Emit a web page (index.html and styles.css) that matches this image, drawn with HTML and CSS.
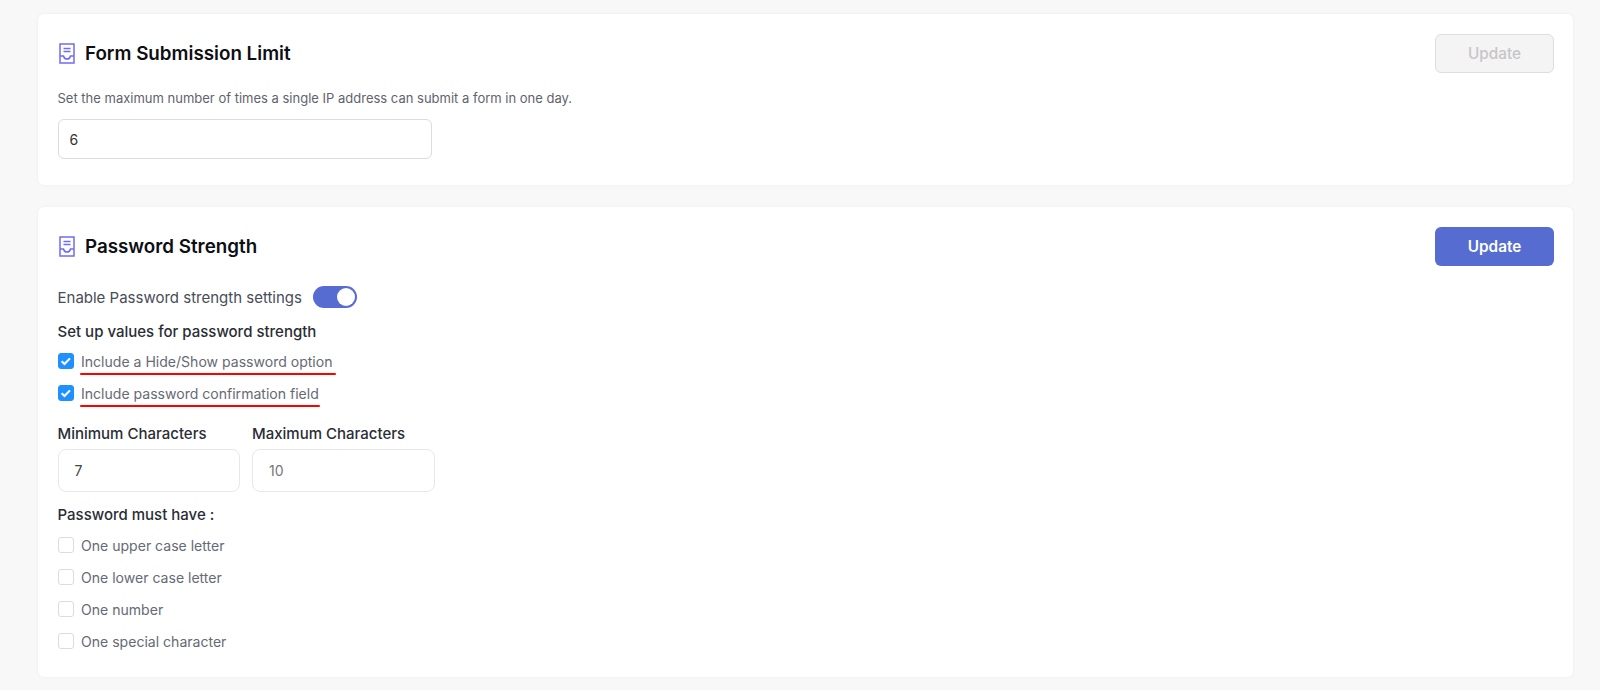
FILE: index.html
```html
<!DOCTYPE html>
<html lang="en">
<head>
<meta charset="utf-8">
<title>Settings</title>
<link rel="stylesheet" href="styles.css">
</head>
<body>
<main class="page">
  <section class="card card-limit">
    <header class="card-head">
      <h2 class="card-title">
        <svg class="doc-icon" viewBox="0 0 16 21" fill="none" stroke="#6f6cf6" stroke-width="1.500"><path d="M1 1h14v19H1z"/><path d="M4.500 5.500h7M4.500 8.500h7"/><path d="M1 13h3.500c.4 2 1.700 3 3.500 3s3.100-1 3.500-3H15"/></svg>
        Form Submission Limit
      </h2>
      <button class="btn btn-disabled" type="button">Update</button>
    </header>
    <p class="hint">Set the maximum number of times a single IP address can submit a form in one day.</p>
    <div class="input input-wide">6</div>
  </section>

  <section class="card card-strength">
    <header class="card-head">
      <h2 class="card-title">
        <svg class="doc-icon" viewBox="0 0 16 21" fill="none" stroke="#6f6cf6" stroke-width="1.500"><path d="M1 1h14v19H1z"/><path d="M4.500 5.500h7M4.500 8.500h7"/><path d="M1 13h3.500c.4 2 1.700 3 3.500 3s3.100-1 3.500-3H15"/></svg>
        Password Strength
      </h2>
      <button class="btn btn-primary" type="button">Update</button>
    </header>
    <div class="toggle-row">
      <span>Enable Password strength settings</span>
      <span class="toggle"><span class="knob"></span></span>
    </div>
    <h3 class="sub sub-values">Set up values for password strength</h3>
    <div class="check-row">
      <span class="box box-on"><svg viewBox="0 0 16 16" fill="none" stroke="#fff" stroke-width="2.400"><path d="M3 8.300l3.300 3.200 6.200-6.500"/></svg></span>
      <span class="check-label">Include a Hide/Show password option<i class="mark mark-one"></i></span>
    </div>
    <div class="check-row">
      <span class="box box-on"><svg viewBox="0 0 16 16" fill="none" stroke="#fff" stroke-width="2.400"><path d="M3 8.300l3.300 3.200 6.200-6.500"/></svg></span>
      <span class="check-label">Include password confirmation field<i class="mark mark-two"></i></span>
    </div>
    <div class="fields">
      <label class="field"><span class="sub">Minimum Characters</span><span class="input input-dark">7</span></label>
      <label class="field"><span class="sub">Maximum Characters</span><span class="input input-muted">10</span></label>
    </div>
    <h3 class="sub sub-must">Password must have :</h3>
    <div class="check-row"><span class="box"></span><span class="check-label">One upper case letter</span></div>
    <div class="check-row"><span class="box"></span><span class="check-label">One lower case letter</span></div>
    <div class="check-row"><span class="box"></span><span class="check-label">One number</span></div>
    <div class="check-row"><span class="box"></span><span class="check-label">One special character</span></div>
  </section>
</main>
</body>
</html>
```

FILE: styles.css
```css
* { box-sizing: border-box; }
html, body { margin: 0; height: 690px; overflow: hidden; }
body {
  background: #f8f8f8;
  font-family: Inter, "Noto Sans", sans-serif;
  color: #3f4350;
}
.page {
  display: flex;
  flex-direction: column;
  gap: 22px;
  padding: 14px 27px 0 38px;
}
.card {
  background: #fff;
  border-radius: 6px;
  box-shadow: 0 0 3px rgba(0, 0, 0, 0.06);
  padding: 20px 19px 0 19.500px;
}
.card-limit { height: 171px; }
.card-strength { height: 470px; }
.card-head {
  display: flex;
  justify-content: space-between;
  align-items: center;
  height: 39px;
}
.card-title {
  display: flex;
  align-items: center;
  gap: 10px;
  margin: 0;
  font-size: 18.800px;
  font-weight: 600;
  color: #0d0f14;
}
.doc-icon { width: 16px; height: 21px; margin-left: 1.500px; }
.btn {
  width: 119px;
  height: 39px;
  border-radius: 6px;
  font: 600 15.300px Inter, sans-serif;
}
.btn-disabled { background: #f4f4f4; border: 1px solid #dedede; color: #c6c6c6; font-weight: 500; }
.btn-primary { background: #566cd0; border: 0; color: #fff; }
.hint { margin: 16px 0 0; font-size: 13px; line-height: 18px; color: #5f636e; }
.input {
  display: flex;
  align-items: center;
  background: #fff;
  border: 1px solid #dcdcdc;
  border-radius: 6px;
  font-size: 14px;
}
.input-wide { width: 374px; height: 40px; margin-top: 12px; padding-left: 11px; color: #333; }
.toggle-row {
  display: flex;
  align-items: center;
  gap: 11px;
  margin-top: 19px;
  height: 24px;
  font-size: 15px;
  color: #484c58;
}
.toggle {
  display: flex;
  justify-content: flex-end;
  align-items: center;
  width: 44px;
  height: 22px;
  padding-right: 2px;
  background: #566cd0;
  border-radius: 11px;
}
.knob { width: 18px; height: 18px; background: #fff; border-radius: 50%; }
.sub { margin: 0; font-size: 15px; font-weight: 500; color: #2a2d35; }
.sub-values { margin-top: 13px; line-height: 20px; }
.check-row { display: flex; align-items: center; gap: 7.500px; height: 32px; font-size: 14.050px; color: #666a75; }
.sub-values + .check-row { margin-top: 3px; }
.box {
  width: 16px;
  height: 16px;
  background: #fff;
  border: 1px solid #dcdcdc;
  border-radius: 3px;
}
.box-on { background: #1e90ff; border-color: #1e90ff; }
.box-on svg { display: block; width: 14px; height: 14px; }
.check-label { position: relative; }
.mark {
  position: absolute;
  left: -1px;
  top: 20px;
  height: 2px;
  background: #f00;
  border-radius: 1px;
}
.mark-one { width: 256px; }
.mark-two { width: 240px; }
.fields { display: flex; gap: 12px; margin-top: 15px; }
.field { display: flex; flex-direction: column; gap: 6px; }
.input-dark, .input-muted { width: 182.500px; height: 43px; padding-left: 16px; border-color: #e8e8e8; border-radius: 8px; }
.input-dark { color: #444; }
.input-muted { color: #777; }
.sub-must { margin: 13px 0 4px; line-height: 20px; }
```
